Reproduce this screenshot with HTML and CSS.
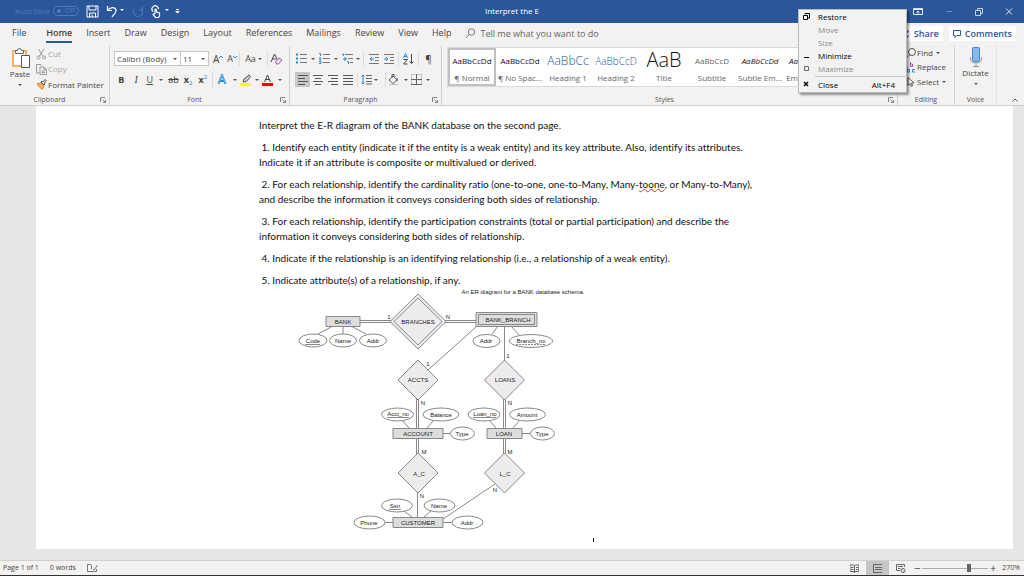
FILE: index.html
```html
<!DOCTYPE html>
<html lang="en">
<head>
<meta charset="utf-8">
<title>Interpret the E</title>
<link rel="stylesheet" href="styles.css">
</head>
<body>
<div class="app">
  <header class="titlebar">
    <div class="quick">
      <span class="autosave">AutoSave <span class="toggle"><i class="knob"></i>Off</span></span>
      <button class="qbtn" aria-label="Save"><svg width="13" height="13" viewBox="0 0 13 13"><path d="M1 1h11v11H1zM3 1v4h7V1M3.500 12V8h6v4M6 9.500V12" fill="none" stroke="#fff"/></svg></button>
      <button class="qbtn undo" aria-label="Undo"><svg width="20" height="13" viewBox="0 0 20 13"><path d="M1.500 1v4.500H6M1.500 5.500C4 2 9 1.500 10 5c.5 3-2 4-4 7" fill="none" stroke="#fff" stroke-width="1.200"/><path d="M14 4h4l-2 2z" fill="#fff"/></svg></button>
      <button class="qbtn" aria-label="Repeat"><svg width="12" height="13" viewBox="0 0 12 13"><path d="M10.500 1v4H7M2.500 4a4.500 4.500 0 1 0 7 0" fill="none" stroke="#5479b5" stroke-width="1.200"/></svg></button>
      <button class="qbtn touch" aria-label="Touch mode"><svg width="18" height="13" viewBox="0 0 18 13"><path d="M2 6.500A3.300 3.300 0 1 1 7.500 4M4 9V4.500q1-1 1.500 0V7l3 1v3l-1 1.500H4.500L2 9.500q.5-1 2-.5" fill="none" stroke="#fff" stroke-width="1.200"/><path d="M14 4h4l-2 2z" fill="#fff"/></svg></button>
      <button class="qbtn" aria-label="Customize toolbar"><svg width="5" height="13" viewBox="0 0 5 13"><path d="M1 4.500h3" stroke="#fff"/><path d="M0 6h5L2.500 8.500z" fill="#fff"/></svg></button>
    </div>
    <h1 class="doc-title">Interpret the E</h1>
    <div class="window-buttons">
      <svg class="warn" width="8" height="5" viewBox="0 0 8 5"><path d="M4 0l3 5H1z" fill="#f59a45"/></svg>
      <button class="qbtn" aria-label="Ribbon display options"><svg width="10" height="9" viewBox="0 0 10 9"><path d="M.5 1.500h9v6h-9zM.5 2.500h9M5 7V4M3.500 5.500L5 4l1.500 1.500" fill="none" stroke="#dfe7f3"/></svg></button>
      <button class="qbtn" aria-label="Minimize"><svg width="8" height="9" viewBox="0 0 8 9"><path d="M1 4.500h6" stroke="#6f8fc1"/></svg></button>
      <button class="qbtn" aria-label="Restore"><svg width="8" height="9" viewBox="0 0 8 9"><path d="M.5 3.500h5v5h-5zM2.500 3V1.500h5v5H6" fill="none" stroke="#c5d3e8"/></svg></button>
      <button class="qbtn" aria-label="Close"><svg width="8" height="9" viewBox="0 0 8 9"><path d="M1 1.500l6 6M7 1.500l-6 6" stroke="#dfe7f3"/></svg></button>
    </div>
  </header>

  <nav class="tabs">
    <a href="#file" class="file">File</a><a href="#home" class="active">Home</a><a href="#insert">Insert</a><a href="#draw">Draw</a><a href="#design">Design</a><a href="#layout">Layout</a><a href="#references">References</a><a href="#mailings">Mailings</a><a href="#review">Review</a><a href="#view">View</a><a href="#help">Help</a>
    <button class="tell"><svg width="11" height="11" viewBox="0 0 11 11"><circle cx="6.500" cy="4" r="3.200" fill="none" stroke="#777"/><path d="M4.300 6.300L1 10" stroke="#777"/></svg>Tell me what you want to do</button>
    <div class="tab-actions">
      <button class="pill"><svg width="9" height="9" viewBox="0 0 9 9"><path d="M3 3H1v5h6V6M3 6q0-3.500 4-3.500M5.500 1L7.500 2.500l-2 2" fill="none" stroke="#2b579a"/></svg>Share</button>
      <button class="pill"><svg width="8" height="8" viewBox="0 0 8 8"><path d="M.5.5h7v5H4l-2 2v-2H.5z" fill="none" stroke="#2b579a"/></svg>Comments</button>
    </div>
  </nav>

  <section class="ribbon">
    <div class="group clipboard">
      <div class="group-body">
        <button class="big paste"><svg width="21" height="22" viewBox="0 0 21 22"><path d="M3 4h13v15H3z" fill="#fff" stroke="#eeb260" stroke-width="2"/><path d="M5.500 3.500h2q0-2 2-2t2 2h2v3h-8z" fill="#fff" stroke="#666"/><path d="M11.500 8.500h8v12h-8z" fill="#fff" stroke="#555"/></svg><span>Paste</span><i class="caret"></i></button>
        <div class="stack">
          <button class="row off"><svg width="11" height="12" viewBox="0 0 11 12"><path d="M2.500 1l4.500 7M8 1L3.500 8" stroke="#999" fill="none"/><circle cx="2.500" cy="9.500" r="1.500" fill="none" stroke="#999"/><circle cx="8" cy="9.500" r="1.500" fill="none" stroke="#999"/></svg>Cut</button>
          <button class="row off"><svg width="11" height="11" viewBox="0 0 11 11"><path d="M4 9H.5V.5H5l1 1M4 3h4l2.500 2.500v5H4zM8 3v2.500h2.500M5.500 7h3.500M5.500 8.500h3.500" fill="none" stroke="#999"/></svg>Copy</button>
          <button class="row"><svg width="11" height="11" viewBox="0 0 11 11"><path d="M1 5l4-1 3 3-2 3.500z" fill="#f3b37a" stroke="#d9822f"/><path d="M5 3l3 3 1-1-1-1 2.500-2L9 .5 7 3 6 2z" fill="#fff" stroke="#555"/></svg>Format Painter</button>
        </div>
      </div>
      <div class="caption">Clipboard<svg class="launch" width="6" height="6" viewBox="0 0 6 6"><path d="M.5 5V.5H5M2.500 2.500l3 3M5.500 3v2.500H3" fill="none" stroke="#888"/></svg></div>
    </div>

    <div class="group font">
      <div class="group-body rows">
        <div class="line">
          <label class="combo name"><select aria-label="Font"><option>Calibri (Body)</option></select><i class="caret"></i></label>
          <label class="combo size"><select aria-label="Font size"><option>11</option></select><i class="caret"></i></label>
          <button class="tool gap-s" aria-label="Grow font"><span class="g10">A</span><svg width="4" height="8" viewBox="0 0 4 8"><path d="M0 3l2-2 2 2" fill="none" stroke="#2b88d8"/></svg></button>
          <button class="tool gap-s" aria-label="Shrink font"><span class="g9">A</span><svg width="4" height="8" viewBox="0 0 4 8"><path d="M0 1l2 2 2-2" fill="none" stroke="#2b88d8"/></svg></button>
          <i class="sep"></i>
          <button class="tool w23 mid" aria-label="Change case"><span class="g9">Aa</span><i class="caret"></i></button>
          <i class="sep"></i>
          <button class="tool" aria-label="Clear formatting"><svg width="13" height="12" viewBox="0 0 13 12"><path d="M1 9l3.500-8L8 8M2.500 6H6" fill="none" stroke="#444"/><path d="M5.500 9L9 5l3 2-3.500 4h-2z" fill="#f3e6f7" stroke="#9b4fae"/></svg></button>
        </div>
        <div class="line">
          <button class="tool w15 mid" aria-label="Bold"><b class="g9">B</b></button>
          <button class="tool w15 mid" aria-label="Italic"><em class="g10 serif">I</em></button>
          <button class="tool w23 lead" aria-label="Underline"><u class="g9">U</u><i class="caret push"></i></button>
          <button class="tool w15 mid" aria-label="Strikethrough"><s class="g9">ab</s></button>
          <button class="tool w15 mid" aria-label="Subscript"><b class="g9">x</b><sub>2</sub></button>
          <button class="tool w15 mid" aria-label="Superscript"><b class="g9">x</b><sup>2</sup></button>
          <i class="sep far"></i>
          <button class="tool w23" aria-label="Text effects"><svg width="10" height="11" viewBox="0 0 10 11"><path d="M1.500 10L5 1l3.500 9M3 7h4" fill="none" stroke="#2b88d8" stroke-width="2"/><path d="M1.500 10L5 1l3.500 9" fill="none" stroke="#a9d1f2" stroke-width=".6"/></svg><i class="caret push"></i></button>
          <button class="tool w23" aria-label="Highlight color"><svg width="11" height="12" viewBox="0 0 11 12"><path d="M3 8l1-3 5-4 1.500 1.500-4 5z" fill="#ccc" stroke="#555"/><path d="M0 9h11v3H0z" fill="#ff0"/></svg><i class="caret push"></i></button>
          <button class="tool w23" aria-label="Font color"><svg width="11" height="12" viewBox="0 0 11 12"><path d="M2.500 8L5.500 1l3 7M3.500 5.500h4" fill="none" stroke="#444"/><path d="M0 9h11v3H0z" fill="#f00"/></svg><i class="caret push"></i></button>
        </div>
      </div>
      <div class="caption">Font<svg class="launch" width="6" height="6" viewBox="0 0 6 6"><path d="M.5 5V.5H5M2.500 2.500l3 3M5.500 3v2.500H3" fill="none" stroke="#888"/></svg></div>
    </div>

    <div class="group paragraph">
      <div class="group-body rows">
        <div class="line">
          <button class="tool w23" aria-label="Bullets"><svg width="12" height="11" viewBox="0 0 12 11"><path d="M1 1.500h2M1 5.500h2M1 9.500h2" stroke="#2b88d8" stroke-width="2"/><path d="M5 1.500h7M5 5.500h7M5 9.500h7" stroke="#777"/></svg><i class="caret push"></i></button>
          <button class="tool w23" aria-label="Numbering"><svg width="12" height="11" viewBox="0 0 12 11"><path d="M1 .5h1.500V3M1 5h2L1.500 7H3M1 8.500h2v2H1" fill="none" stroke="#2b88d8"/><path d="M5 1.500h7M5 5.500h7M5 9.500h7" stroke="#777"/></svg><i class="caret push"></i></button>
          <button class="tool w20" aria-label="Multilevel list"><svg width="12" height="11" viewBox="0 0 12 11"><path d="M1 1h1.500v2M3 5h2v2H3zM6 8.500h1.500V11" fill="none" stroke="#2b88d8"/><path d="M4 1.500h8M7 5.500h5M9 9.500h3" stroke="#777"/></svg><i class="caret push"></i></button>
          <i class="sep"></i>
          <button class="tool w15 mid" aria-label="Decrease indent"><svg width="10" height="10" viewBox="0 0 10 10"><path d="M0 .5h10M6 3.500h4M6 6.500h4M0 9.500h10" stroke="#777"/><path d="M5 5H1M3 3L1 5l2 2" fill="none" stroke="#2b88d8"/></svg></button>
          <button class="tool w15 mid" aria-label="Increase indent"><svg width="10" height="10" viewBox="0 0 10 10"><path d="M0 .5h10M6 3.500h4M6 6.500h4M0 9.500h10" stroke="#777"/><path d="M0 5h4M2 3l2 2-2 2" fill="none" stroke="#2b88d8"/></svg></button>
          <i class="sep"></i>
          <button class="tool w15 mid" aria-label="Sort"><svg width="11" height="12" viewBox="0 0 11 12"><path d="M.5 5L2.500.5l2 4.500M1 3.500h3" fill="none" stroke="#2b88d8"/><path d="M.5 6.500h4l-4 4.500h4M8.500 1v9.500M6.500 8.500l2 2 2-2" fill="none" stroke="#444"/></svg></button>
          <i class="sep"></i>
          <button class="tool w15 mid" aria-label="Show marks"><span class="g10">¶</span></button>
        </div>
        <div class="line">
          <button class="tool w15 mid on" aria-label="Align left"><svg width="10" height="10" viewBox="0 0 10 10"><path d="M0 .5h10M0 3.500h7M0 6.500h10M0 9.500h7" stroke="#555"/></svg></button>
          <button class="tool w15 mid" aria-label="Center"><svg width="10" height="10" viewBox="0 0 10 10"><path d="M0 .5h10M2 3.500h6M0 6.500h10M2 9.500h6" stroke="#555"/></svg></button>
          <button class="tool w15 mid" aria-label="Align right"><svg width="10" height="10" viewBox="0 0 10 10"><path d="M0 .5h10M3 3.500h7M0 6.500h10M3 9.500h7" stroke="#555"/></svg></button>
          <button class="tool w15 mid" aria-label="Justify"><svg width="10" height="10" viewBox="0 0 10 10"><path d="M0 .5h10M0 3.500h10M0 6.500h10M0 9.500h10" stroke="#555"/></svg></button>
          <i class="sep"></i>
          <button class="tool w23" aria-label="Line spacing"><svg width="12" height="11" viewBox="0 0 12 11"><path d="M3 1v9M1.500 2.500L3 1l1.500 1.500M1.500 8.500L3 10l1.500-1.500" fill="none" stroke="#2b88d8"/><path d="M6 1.500h6M6 4.500h6M6 7.500h6M6 10h6" stroke="#666"/></svg><i class="caret"></i></button>
          <i class="sep"></i>
          <button class="tool w23" aria-label="Shading"><svg width="11" height="11" viewBox="0 0 11 11"><path d="M1 6l4-4 4 4-4 3.500zM4 4V.5h2V3" fill="#fff" stroke="#555"/><path d="M8 3.500q3 1 1.500 4z" fill="#2b6cb5"/><path d="M1 10.500h9" stroke="#bbb"/></svg><i class="caret push"></i></button>
          <button class="tool w20" aria-label="Borders"><svg width="11" height="11" viewBox="0 0 11 11"><path d="M.5.5h10v10H.5z" fill="none" stroke="#999" stroke-dasharray="1 1"/><path d="M5.500 0v11M0 5.500h11M0 10.500h11" stroke="#666"/></svg><i class="caret push"></i></button>
        </div>
      </div>
      <div class="caption">Paragraph<svg class="launch" width="6" height="6" viewBox="0 0 6 6"><path d="M.5 5V.5H5M2.500 2.500l3 3M5.500 3v2.500H3" fill="none" stroke="#888"/></svg></div>
    </div>

    <div class="group styles">
      <div class="group-body">
        <div class="gallery">
          <button class="style chosen"><span class="sample">AaBbCcDd</span><span class="label">¶ Normal</span></button>
          <button class="style"><span class="sample">AaBbCcDd</span><span class="label">¶ No Spac...</span></button>
          <button class="style"><span class="sample h1s">AaBbCc</span><span class="label">Heading 1</span></button>
          <button class="style"><span class="sample h2s">AaBbCcD</span><span class="label">Heading 2</span></button>
          <button class="style"><span class="sample ttl">AaB</span><span class="label">Title</span></button>
          <button class="style"><span class="sample sub">AaBbCcD</span><span class="label">Subtitle</span></button>
          <button class="style"><span class="sample em">AaBbCcDd</span><span class="label">Subtle Em...</span></button>
          <button class="style edge"><span class="sample em">Aa</span><span class="label">Em</span></button>
        </div>
      </div>
      <div class="caption">Styles<svg class="launch" width="6" height="6" viewBox="0 0 6 6"><path d="M.5 5V.5H5M2.500 2.500l3 3M5.500 3v2.500H3" fill="none" stroke="#888"/></svg></div>
    </div>

    <div class="group editing">
      <div class="group-body">
        <div class="stack">
          <button class="row"><svg width="9" height="10" viewBox="0 0 9 10"><circle cx="5" cy="4" r="3.500" fill="none" stroke="#555"/><path d="M3 6.500L0 9.500" stroke="#555"/></svg>Find <i class="caret"></i></button>
          <button class="row"><svg width="9" height="11" viewBox="0 0 9 11"><path d="M3.500 0v4.500h2v-2.500h-2" fill="none" stroke="#b04ac0"/><path d="M2.500 7.500h-2v2.500h2zV10.500M8 7.500H5.500V10H8M.5 5.500v1" fill="none" stroke="#2b88d8"/></svg>Replace</button>
          <button class="row"><svg width="9" height="10" viewBox="0 0 9 10"><path d="M1 .5v8l2-2 1.500 3 1-.5L4.500 6H7z" fill="#fff" stroke="#555"/></svg>Select<i class="caret"></i></button>
        </div>
      </div>
      <div class="caption plain">Editing</div>
    </div>

    <div class="group voice">
      <div class="group-body">
        <button class="big"><svg width="14" height="21" viewBox="0 0 14 21"><path d="M1.500 10v2q0 4 5.500 4t5.500-4v-2M7 16v3M4 19.500h6" fill="none" stroke="#999"/><rect x="3.500" y=".5" width="7" height="14" rx="1" fill="#83b9ec" stroke="#3b86cc"/></svg><span>Dictate</span><i class="caret"></i></button>
      </div>
      <div class="caption plain">Voice</div>
    </div>
    <div class="ribbon-end"><button aria-label="Collapse ribbon"><svg width="6" height="4" viewBox="0 0 6 4"><path d="M.5 3.500L3 1l2.500 2.500" fill="none" stroke="#555"/></svg></button></div>
  </section>

  <main class="desk">
    <article class="page">
      <p>Interpret the E-R diagram of the BANK database on the second page.</p>
      <p>&nbsp;1. Identify each entity (indicate it if the entity is a weak entity) and its key attribute. Also, identify its attributes.<br>Indicate it if an attribute is composite or multivalued or derived.</p>
      <p>&nbsp;2. For each relationship, identify the cardinality ratio (one-to-one, one-to-Many, Many-<span class="typo">toone</span>, or Many-to-Many),<br>and describe the information it conveys considering both sides of relationship.</p>
      <p>&nbsp;3. For each relationship, identify the participation constraints (total or partial participation) and describe the<br>information it conveys considering both sides of relationship.</p>
      <p>&nbsp;4. Indicate if the relationship is an identifying relationship (i.e., a relationship of a weak entity).</p>
      <p>&nbsp;5. Indicate attribute(s) of a relationship, if any.</p>
      <figure class="diagram">
        <svg width="341" height="256" viewBox="259 288 341 256" role="img" aria-label="ER diagram for a BANK database schema">
          <g class="wire">
            <path d="M360 320.500h32M360 322.500h32M444 320.500h32M444 322.500h32M333 326l-15 8M343 326v8M351 326l15 8M498 326l-6 8M511 326l8 9M477 326l-49 44M504.500 326v35"/>
            <path d="M416.500 399v30M418.500 399v30M503.500 399v30M505.500 399v30M416.500 438v16M418.500 438v16M503.500 438v16M505.500 438v16M417.500 492v25"/>
            <path d="M402 420l7 8M434 420l-7 8M489 420l7 8M520 420l-7 8M443 433.500h8M522 433.500h9M495 484l-52 35M404 511l8 6M431 511l-7 6M385 522.500h8M443 522.500h9"/>
          </g>
          <g class="entity">
            <path d="M326 316.500h34v10h-34zM476 312.500h61v14h-61zM478.500 314.500h56v10h-56zM393 428.500h50v10h-50zM487 428.500h35v10h-35zM393 517.500h50v10h-50z"/>
          </g>
          <g class="relation">
            <path d="M418 294l28 27.500-28 27.500-28-27.500zM418 298l24 23.500-24 23.500-24-23.500zM418 360l20 20-20 20-20-20zM504.500 360l20 20-20 20-20-20zM418 453l20 20-20 20-20-20zM504.500 453l20 20-20 20-20-20z"/>
          </g>
          <g class="attr">
            <ellipse cx="313" cy="340.500" rx="14" ry="6.500"/><ellipse cx="343" cy="340.500" rx="13.500" ry="6.500"/><ellipse cx="373" cy="340.500" rx="13.500" ry="6.500"/>
            <ellipse cx="486.500" cy="341" rx="13.500" ry="6.500"/><ellipse cx="531" cy="341" rx="21.500" ry="6.500"/>
            <ellipse cx="397.500" cy="414.500" rx="16" ry="6.500"/><ellipse cx="441" cy="414.500" rx="18" ry="6.500"/><ellipse cx="484" cy="414.500" rx="16" ry="6.500"/><ellipse cx="527.500" cy="414.500" rx="18" ry="6.500"/>
            <ellipse cx="462.500" cy="433.500" rx="12" ry="6.500"/><ellipse cx="542.500" cy="433.500" rx="12" ry="6.500"/>
            <ellipse cx="397" cy="505.500" rx="15.500" ry="6.500"/><ellipse cx="439.500" cy="505.500" rx="15.500" ry="6.500"/><ellipse cx="369.500" cy="522.500" rx="15.500" ry="6.500"/><ellipse cx="467.500" cy="522.500" rx="15.500" ry="6.500"/>
            <path d="M305 344.500h15M387 417.500h22M473 417.500h23M389 509.500h12"/><path class="dash" d="M516 344.500h30"/>
          </g>
          <g class="txt">
            <text x="523" y="294">An ER diagram for a BANK database schema.</text>
            <text x="343" y="324">BANK</text><text x="418" y="324">BRANCHES</text><text x="508" y="322">BANK_BRANCH</text>
            <text x="389" y="319">1</text><text x="448" y="319">N</text>
            <text x="313" y="343">Code</text><text x="343" y="343">Name</text><text x="373" y="343">Addr</text>
            <text x="486" y="343">Addr</text><text x="531" y="343">Branch_no</text>
            <text x="428" y="366">1</text><text x="508" y="358">1</text>
            <text x="418" y="382">ACCTS</text><text x="505" y="382">LOANS</text>
            <text x="423" y="405">N</text><text x="510" y="405">N</text>
            <text x="398" y="416">Acct_no</text><text x="441" y="417">Balance</text><text x="485" y="416">Loan_no</text><text x="527" y="417">Amount</text>
            <text x="418" y="436">ACCOUNT</text><text x="462" y="436">Type</text><text x="504" y="436">LOAN</text><text x="542" y="436">Type</text>
            <text x="424" y="454">M</text><text x="510" y="454">M</text>
            <text x="419" y="476">A_C</text><text x="505" y="476">L_C</text>
            <text x="422" y="498">N</text><text x="495" y="492">N</text>
            <text x="395" y="508">Ssn</text><text x="439" y="508">Name</text>
            <text x="369" y="525">Phone</text><text x="418" y="525">CUSTOMER</text><text x="467" y="525">Addr</text>
          </g>
          <path d="M593.500 538v4" stroke="#111"/>
        </svg>
      </figure>
    </article>
  </main>

  <footer class="status">
    <span>Page 1 of 1</span>
    <span>0 words</span>
    <svg width="11" height="9" viewBox="0 0 11 9"><path d="M4 .5H.5v7h9V5M4.500 1v4M6 5l1 1 3.500-5" fill="none" stroke="#777"/></svg>
    <div class="status-right">
      <button class="view" aria-label="Read mode"><svg width="9" height="9" viewBox="0 0 9 9"><path d="M0 1h3.500l1 .5 1-.5H9v6.500H0zM4.500 1v8M1 3.500h2.500M1 5.500h2.500M6 3.500h2.500M6 5.500h2.500" fill="none" stroke="#666"/></svg></button>
      <button class="view current" aria-label="Print layout"><svg width="9" height="9" viewBox="0 0 9 9"><path d="M0 .5h9M2 3.500h7M2 5.500h7M0 8.500h9M.5 1v7" stroke="#666"/></svg></button>
      <button class="view" aria-label="Web layout"><svg width="10" height="9" viewBox="0 0 10 9"><path d="M4 6.500H.5v-6h8V3M2 2.500h5M2 4.500h2.500" fill="none" stroke="#666"/><circle cx="7" cy="6.500" r="2" fill="#ddd" stroke="#666"/></svg></button>
      <button class="zoom-step" aria-label="Zoom out">−</button>
      <input class="zoom" type="range" min="0" max="100" value="72" aria-label="Zoom">
      <button class="zoom-step" aria-label="Zoom in">+</button>
      <span class="percent">270%</span>
    </div>
  </footer>

  <div class="menu" role="menu">
    <button role="menuitem"><svg width="7" height="7" viewBox="0 0 7 7"><path d="M.5 2.500h4v4h-4zM2 1.500V.5h4.500V5H5" fill="none" stroke="#000"/></svg>Restore</button>
    <button role="menuitem" disabled><i></i>Move</button>
    <button role="menuitem" disabled><i></i>Size</button>
    <button role="menuitem"><svg width="7" height="7" viewBox="0 0 7 7"><path d="M1 5.500h5" stroke="#000"/></svg>Minimize</button>
    <button role="menuitem" disabled><svg width="7" height="7" viewBox="0 0 7 7"><path d="M1.500 1.500h4v4h-4z" fill="none" stroke="#666"/></svg>Maximize</button>
    <hr>
    <button role="menuitem"><svg width="7" height="7" viewBox="0 0 7 7"><path d="M1 1l4 4M5 1L1 5" stroke="#000" stroke-width="1.400"/></svg>Close<kbd>Alt+F4</kbd></button>
  </div>
</div>
</body>
</html>
```
FILE: styles.css
```css
* { box-sizing: border-box; }
body { margin: 0; background: #e6e6e6; font: 8px/12px "Open Sans", "Noto Sans", sans-serif; color: #444; }
button { display: inline-flex; align-items: center; margin: 0; padding: 0; border: 0; background: none; color: inherit; font: inherit; white-space: nowrap; }
a { color: inherit; text-decoration: none; }
svg { display: block; flex: none; }
.app { position: relative; display: flex; flex-direction: column; min-height: 100vh; overflow: hidden; }

.titlebar { display: grid; grid-template-columns: 1fr auto 1fr; align-items: center; height: 23px; padding-bottom: 1px; background: #2b579a; color: #fff; }
.quick { display: flex; align-items: center; gap: 7px; padding-left: 15px; }
.autosave { display: flex; align-items: center; gap: 3px; color: #5479b5; }
.toggle { display: flex; align-items: center; gap: 4px; height: 10px; padding: 0 3px; border: 1px solid #5479b5; border-radius: 5px; font-size: 7px; }
.knob { width: 4px; height: 4px; border-radius: 50%; background: #5479b5; }
.undo, .touch { margin-right: -1px; }
.doc-title { margin: 0; font-size: 8px; font-weight: 400; }
.window-buttons { display: flex; align-items: center; justify-content: flex-end; gap: 22px; padding-right: 11px; }
.warn { margin-right: 62px; }

.tabs { display: flex; align-items: center; gap: 14px; height: 23px; padding: 0 8px 2px 12px; background: #f3f2f1; font-size: 9px; white-space: nowrap; }
.tabs a { display: flex; align-items: center; height: 19px; border-bottom: 2px solid transparent; }
.tabs .file { margin-right: 6px; }
.tabs .active { border-bottom-color: #2b579a; font-weight: 600; }
.tell { gap: 4px; color: #666; }
.tab-actions { display: flex; gap: 6px; margin-left: auto; }
.pill { gap: 4px; height: 15px; padding: 0 4px; background: #fff; color: #2b579a; font-weight: 600; }

.ribbon { display: flex; height: 60px; background: #f3f2f1; border-bottom: 1px solid #d2d0ce; }
.group { display: flex; flex: none; flex-direction: column; justify-content: space-between; border-right: 1px solid #d2d0ce; }
.group-body { display: flex; height: 46px; }
.caption { display: flex; align-items: center; justify-content: center; position: relative; height: 10px; padding-right: 10px; color: #555; font-size: 7px; line-height: 10px; }
.plain { padding-right: 0; }
.launch { position: absolute; right: 3px; top: 2px; }
.clipboard { width: 110px; }
.font { width: 180px; }
.paragraph { width: 152px; }
.styles { flex: 1; min-width: 0; }
.editing { width: 57px; }
.voice { width: 42px; border-right-color: #e4e2e0; }
.caret { flex: none; width: 0; height: 0; border: 2px solid transparent; border-top-color: #555; border-bottom: 0; margin-left: 2px; }
.caret.push { margin-left: auto; margin-right: 3px; }
.big { flex-direction: column; justify-content: flex-start; padding-top: 1px; line-height: 10px; }
.big .caret { margin: 5px 0 0; }
.paste { width: 26px; margin-left: 7px; }
.voice .big { flex: 1; }
.stack { display: flex; flex-direction: column; justify-content: space-between; align-items: flex-start; margin-left: 3px; }
.row { gap: 1px; height: 15px; }
.off { color: #a6a6a6; }
.editing .stack { height: 43px; margin-left: 9px; }
.rows { flex-direction: column; justify-content: space-between; padding: 5px 4px; }
.paragraph .rows { padding-left: 5px; padding-right: 0; }
.line { display: flex; align-items: center; height: 15px; }
.combo { display: flex; align-items: center; height: 15px; padding: 0 3px 0 2px; border: 1px solid #c8c6c4; background: #fff; }
.combo select { flex: 1; min-width: 0; padding: 0; border: 0; background: none; appearance: none; color: #444; font: inherit; }
.name { width: 67px; }
.size { width: 28px; border-left: 0; }
.tool { height: 15px; }
.mid { justify-content: center; }
.lead { padding-left: 3px; }
.gap-s { margin-left: 4px; }
.sep { flex: none; width: 1px; height: 14px; margin: 0 2px; background: #dcdad8; }
.far { margin-right: 4px; }
.w15 { width: 15px; }
.w20 { width: 20px; }
.w23 { width: 23px; }
.w20 .caret.push { margin-right: 1px; }
.g9 { font-size: 9px; }
.g10 { font-size: 10px; }
.serif { font-family: "Liberation Serif", serif; }
.tool sub, .tool sup { color: #2b88d8; font-size: 6px; line-height: 6px; }
.tool sub { margin-top: 6px; }
.tool sup { margin-bottom: 6px; }
.on { background: #c8c6c4; }

.gallery { display: flex; flex: 1; height: 40px; margin: 1px 0 0 5px; overflow: hidden; border: 1px solid #dcdad8; background: #fff; }
.style { flex: none; flex-direction: column; justify-content: flex-end; width: 48px; height: 38px; padding-bottom: 2px; overflow: hidden; }
.chosen { border: 2px solid #c0c0c0; padding-bottom: 0; }
.edge { width: 14px; align-items: flex-end; }
.sample { display: flex; align-items: center; height: 22px; color: #111; font: 8px/20px "Open Sans", sans-serif; }
.label { color: #666; font-size: 8px; line-height: 12px; }
.h1s { color: #2f5496; font-size: 12px; font-weight: 300; }
.h2s { color: #2f5496; font-size: 10px; font-weight: 300; }
.ttl { height: 26px; font-size: 20px; font-weight: 300; }
.sub { color: #666; }
.em { font-style: italic; }
.ribbon-end { display: flex; align-items: flex-end; justify-content: flex-end; width: 27px; padding: 0 6px 3px 0; }

.desk { flex: 1; padding: 0 11px 11px 36px; background: #e6e6e6; }
.page { min-height: 443px; padding: 12px 0 0 223px; background: #fff; color: #111; font: 10px/15px Lato, "Open Sans", sans-serif; font-variant-ligatures: none; white-space: nowrap; }
.page p { margin: 0 0 7px; }
.page p:nth-last-of-type(1) { margin-bottom: 0; }
.typo { text-decoration: underline wavy #e03030 1px; text-underline-offset: 0; }
.diagram { margin: 0; }
.wire, .entity, .relation, .attr { fill: none; stroke: #888; stroke-width: 1; }
.entity { fill: #ddd; }
.relation { fill: #ececec; }
.attr ellipse { fill: #fff; }
.dash { stroke-dasharray: 2 1; }
.txt { fill: #222; font: 6px "Liberation Sans", sans-serif; text-anchor: middle; }

.status { display: flex; align-items: center; gap: 11px; height: 16px; padding-left: 3px; border-top: 1px solid #d2d0ce; border-bottom: 1px solid #333; background: #f3f2f1; font-size: 7px; }
.status-right { display: flex; align-items: center; height: 100%; margin-left: auto; padding-right: 4px; }
.view { justify-content: center; width: 23px; height: 14px; }
.current { background: #c8c6c4; }
.zoom-step { justify-content: center; width: 10px; font-size: 11px; }
.zoom { width: 66px; height: 12px; margin: 0; appearance: none; background: linear-gradient(#aaa, #aaa) center / 100% 1px no-repeat; }
.zoom::-webkit-slider-thumb { appearance: none; width: 4px; height: 8px; background: #666; }
.percent { margin-left: 4px; }

.menu { position: absolute; left: 798px; top: 9px; width: 109px; padding: 0 1px 1px; border: 1px solid #bbb; background: #f2f2f2; box-shadow: 2px 2px 2px rgba(0, 0, 0, .4); color: #000; font-size: 8px; }
.menu button { display: flex; gap: 8px; width: 100%; height: 13px; padding: 0 10px 0 3px; }
.menu button i { width: 7px; }
.menu button:disabled { color: #888; }
.menu kbd { margin-left: auto; font: inherit; }
.menu hr { margin: 1px 0 1px 15px; border: 0; border-top: 1px solid #c8c8c8; }
```
